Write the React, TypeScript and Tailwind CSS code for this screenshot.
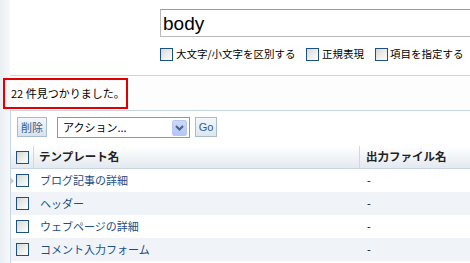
import React from "react";

const jp = { fontFamily: '"Noto Sans CJK JP", "Liberation Sans", sans-serif' };

function Cb() {
  return (
    <span className="inline-block w-[13px] h-[13px] shrink-0 border border-[#1c5180] bg-gradient-to-br from-[#d8d8d0] via-[#ececea] to-white" />
  );
}

const rows = ["ブログ記事の詳細", "ヘッダー", "ウェブページの詳細", "コメント入力フォーム"];

export default function App() {
  return (
    <div className="relative w-[470px] h-[263px] overflow-hidden bg-white flex" style={jp}>
      <div className="w-[10px] shrink-0 bg-gradient-to-r from-[#e9eef3] to-[#f7f9fb]" />
      <div className="flex-1 flex flex-col min-w-0">
        {/* search area */}
        <div className="h-[76px] pl-[150px] pt-[9px] border-b border-[#c8d6e3] flex flex-col">
          <div className="w-[330px] h-[28px] border border-[#b8b8b8] border-t-[#9a9a9a] flex items-center pl-[2px]">
            <span className="text-[19px] leading-none text-black" style={{ fontFamily: '"Liberation Sans", Arial, sans-serif' }}>body</span>
          </div>
          <div className="mt-[11px] flex items-center text-[10.5px] leading-none text-black">
            <div className="w-[146px] flex items-center gap-[3px]"><Cb /><span>大文字/小文字を区別する</span></div>
            <div className="w-[69px] flex items-center gap-[3px]"><Cb /><span>正規表現</span></div>
            <div className="flex items-center gap-[2px]"><Cb /><span>項目を指定する</span></div>
          </div>
        </div>
        {/* status band */}
        <div className="h-[35px] bg-[#fdfdfd] border-b border-[#c8d6e3] flex items-center pl-[1px]">
          <span className="text-[11px] text-black leading-none">22 件見つかりました。</span>
        </div>
        {/* panel */}
        <div className="flex-1 border-l border-[#c8d6e3] flex flex-col">
          <div className="h-[35px] pt-[6px] pl-[6px] flex items-start">
            <div className="w-[30px] h-[20px] border border-[#a9bccd] bg-gradient-to-b from-[#f4f7fa] to-[#d9e3ec] flex items-center justify-center text-[11px] text-[#2d5d8e] leading-none">削除</div>
            <div className="ml-[10px] w-[133px] h-[21px] border border-[#7f9db9] bg-white flex items-center justify-between pl-[5px] pr-[2px]">
              <span className="text-[11px] leading-none text-black">アクション...</span>
              <span className="w-[15px] h-[16px] rounded-[2px] bg-gradient-to-b from-[#cad9fd] to-[#b3c7f6] border border-[#b6c8f3] flex items-center justify-center">
                <svg width="9" height="6" viewBox="0 0 9 6"><path d="M1 1 L4.5 4.5 L8 1" fill="none" stroke="#4d6185" strokeWidth="2" /></svg>
              </span>
            </div>
            <div className="ml-[5px] w-[22px] h-[20px] border border-[#a9bccd] bg-gradient-to-b from-[#f4f7fa] to-[#dde6ee] flex items-center justify-center text-[11px] text-[#2d5d8e] leading-none" style={{ fontFamily: '"Liberation Sans", Arial, sans-serif' }}>Go</div>
          </div>
          {/* header */}
          <div className="h-[23px] flex items-stretch bg-gradient-to-b from-white to-[#e3e9ef] border-b border-[#c8d6e3]">
            <div className="w-[23px] flex items-center pl-[5px] border-r border-[#cfd9e2]"><Cb /></div>
            <div className="w-[326px] flex items-center pl-[5px] border-r border-[#cfd9e2] text-[11.5px] font-bold text-[#222] leading-none">テンプレート名</div>
            <div className="flex-1 flex items-center pl-[6px] text-[11.5px] font-bold text-[#222] leading-none whitespace-nowrap">出力ファイル名</div>
          </div>
          {rows.map((r, i) => (
            <div key={r} className={"relative h-[23px] flex items-center " + (i % 2 === 1 ? "bg-[#f0f4f8]" : "bg-white")}>
              {i === 0 && (
                <span className="absolute left-[-1px] top-[8px] w-0 h-0 border-y-[4px] border-y-transparent border-l-[4px] border-l-[#bfcbd7]" />
              )}
              <div className="w-[24px] pl-[5px] flex items-center"><Cb /></div>
              <div className="w-[326px] pl-[5px] text-[11px] text-[#1d4e82] leading-none whitespace-nowrap">{r}</div>
              <div className="flex-1 pl-[6px] text-[11px] text-black leading-none">-</div>
            </div>
          ))}
        </div>
      </div>
      {/* highlight annotation */}
      <div className="absolute left-[3px] top-[78px] w-[125px] h-[31px] border-2 border-[#e00000] pointer-events-none" />
    </div>
  );
}
